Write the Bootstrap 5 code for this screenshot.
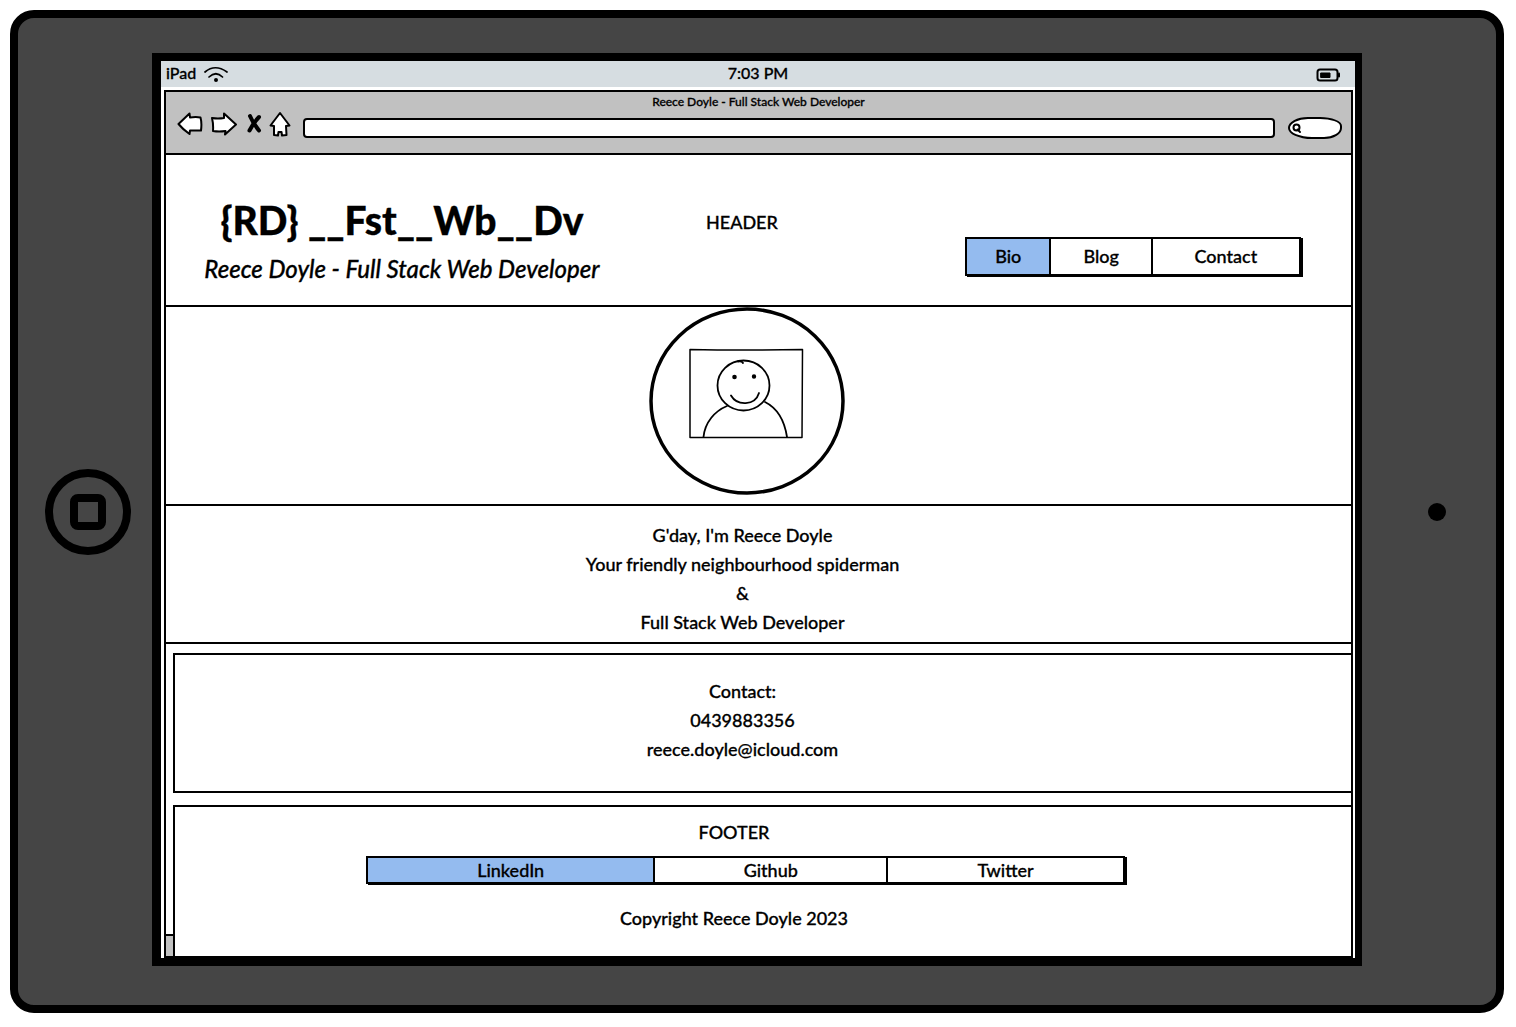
<!DOCTYPE html>
<html lang="en">
<head>
<meta charset="utf-8">
<meta name="viewport" content="width=device-width, initial-scale=1">
<title>Reece Doyle - Full Stack Web Developer</title>
<link href="https://cdn.jsdelivr.net/npm/bootstrap@5.3.0/dist/css/bootstrap.min.css" rel="stylesheet">
<style>
  body { font-family: Lato, sans-serif; font-size: 18px; font-weight: 500; line-height: 29px; color: #000; background: #fff; -webkit-text-stroke: 0.3px #000; }
  svg { display: block; flex: none; fill: none; stroke: #000; stroke-width: 2; stroke-linecap: round; stroke-linejoin: round; }
  a { color: #000; text-decoration: none; }
  .tablet { margin: 10px 12px 13px 10px; padding: 35px 0 39px; border: 8px solid #000; border-radius: 24px; background: #454545; }
  .bezel { width: 134px; flex: none; padding-top: 5px; }
  .bezel-home { padding-left: 5px; }
  .bezel-camera { padding-left: 16px; }
  .home-key { width: 86px; height: 86px; border: 8px solid #000; border-radius: 50%; background: none; }
  .home-key span { width: 36px; height: 36px; border: 8px solid #000; border-radius: 8px; }
  .lens { width: 18px; height: 18px; border-radius: 50%; background: #000; }
  .screen { min-width: 0; background: #fff; border: solid #000; border-width: 8px 7px 8px 9px; }
  .status { height: 26px; padding: 0 15px 2px 5px; background: #d6dde1; font-size: 16px; line-height: 24px; }
  .browser { margin: 3px 2px 0 3px; border: 2px solid #000; border-bottom: 0; }
  .chrome { height: 61px; background: #c1c1c1; }
  .chrome-title { font-size: 12px; line-height: 20px; }
  .tools { padding: 0 9px 0 11px; margin-top: -3px; }
  .tools button { border: 0; padding: 0; background: none; }
  .tools svg { fill: #fff; }
  .address { height: 20px; border: 2px solid #000; border-radius: 4px; background: #fff; padding: 0 8px; font-size: 12px; min-width: 0; margin-left: 10px; }
  .search-box { margin-left: 13px; }
  .search-pill { width: 54px; height: 22px; border: 2px solid #000; border-radius: 20px 22px 18px 24px / 11px 9px 11px 11px; background: #fff; padding: 0 4px 0 16px; font-size: 11px; }
  .search-glyph { left: 4px; top: 6px; }
  .band { border-top: 2px solid #000; }
  .band-header { height: 152px; padding: 0 50px 0 38px; }
  .brand { width: 396px; padding-top: 42px; }
  .brand h1 { font-size: 39px; line-height: 46px; font-weight: 900; }
  .brand p { font-size: 24px; line-height: 36px; }
  .band-label { margin-left: 106px; padding-top: 53px; }
  .tabs { border: 2px solid #000; box-shadow: 2px 1px 0 #000; }
  .tabs a { text-align: center; }
  .tabs a + a { border-left: 2px solid #000; }
  .tabs a.active { background: #94bbef; }
  .tabs-top { width: 336px; margin-top: 82px; line-height: 35px; }
  .tabs-foot { margin: 9px 226px 0 191px; line-height: 24px; }
  .band-portrait { height: 199px; padding-right: 24px; }
  .band-intro { height: 138px; padding: 15px 32px 0 0; }
  .sheet { border: 2px solid #000; border-right: 0; margin-left: 7px; }
  .band-gap { border-top: 2px solid #000; height: 11px; }
  .sheet-contact { height: 140px; padding: 22px 41px 0 0; margin-bottom: 12px; }
  .sheet-footer { height: 153px; margin-left: 0; padding-top: 11px; }
  .foot-text { padding-right: 58px; }
  .scroll-stub { width: 7px; height: 24px; border-top: 2px solid #000; border-bottom: 2px solid #000; background: #c1c1c1; }
</style>
</head>
<body>
<div class="tablet d-flex">
  <div class="bezel bezel-home d-flex align-items-center justify-content-center">
    <button class="home-key d-flex align-items-center justify-content-center p-0" aria-label="Home"><span></span></button>
  </div>

  <div class="screen flex-grow-1">
    <div class="status d-flex align-items-center justify-content-between position-relative">
      <div class="d-flex align-items-center">
        <span>iPad</span>
        <svg class="ms-2 mt-1" width="24" height="18" viewBox="0 0 24 18"><path d="M1 6Q11-2.500 23 6M5 11Q12 4.500 18.500 11" stroke-width="1.700"/><circle cx="12" cy="14" r="1" fill="#000"/></svg>
      </div>
      <span class="position-absolute start-50 translate-middle-x">7:03 PM</span>
      <svg class="mt-1" width="24" height="14" viewBox="0 0 24 14"><rect x="1.500" y="1.500" width="20" height="11" rx="2.500"/><path d="M23 5.500v3"/><path d="M5 5h9v4.500H5z" fill="#000" stroke-width="1"/></svg>
    </div>

    <div class="browser">
      <div class="chrome d-flow-root">
        <div class="chrome-title text-center">Reece Doyle - Full Stack Web Developer</div>
        <div class="tools d-flex align-items-center">
          <button aria-label="Back"><svg width="26" height="24" viewBox="0 0 26 24"><path d="M1.500 12 12.500 1.500 13 5.500Q19 4.500 23.500 5.500 25 11 24 18.500L13 18.500 12.500 22Q6 17.500 1.500 12Z"/></svg></button>
          <button class="ms-2" aria-label="Forward"><svg width="26" height="24" viewBox="0 0 26 24"><path d="M1 6Q7 7 13 6V1.500L25 12.500 14 22.500 14.500 19Q8 20 2 19 2.500 12 1 6Z"/></svg></button>
          <button class="ms-2" aria-label="Stop"><svg width="18" height="24" viewBox="0 0 18 24"><path d="M5 4Q8 11 14 18.500M14 5Q9 10 4.500 18.500" stroke-width="4"/></svg></button>
          <button class="ms-1" aria-label="Home page"><svg width="26" height="26" viewBox="0 0 24 26"><path d="M12 2 21.500 14.500 18 15 18.500 24 14 24.500 13.500 21H10.500L10 24.500 6 24V15L2.500 14.500Z"/></svg></button>
          <input class="address flex-grow-1 mt-2" type="text" aria-label="Address">
          <div class="search-box position-relative d-flex mt-2">
            <input class="search-pill" type="text" aria-label="Search">
            <svg class="search-glyph position-absolute" width="12" height="12" viewBox="0 0 12 12"><circle cx="4.500" cy="4.500" r="3"/><path d="M5.500 6.500 8 9"/></svg>
          </div>
        </div>
      </div>

      <header class="band band-header d-flex align-items-start">
        <div class="brand d-flex flex-column align-items-center flex-shrink-0 text-nowrap">
          <h1 class="mb-2">{RD} __Fst__Wb__Dv</h1>
          <p class="fst-italic mb-0">Reece Doyle - Full Stack Web Developer</p>
        </div>
        <div class="band-label">HEADER</div>
        <nav class="tabs tabs-top d-flex ms-auto" aria-label="Main">
          <a class="active" style="flex:84" href="#bio">Bio</a>
          <a style="flex:101" href="#blog">Blog</a>
          <a style="flex:149" href="#contact">Contact</a>
        </nav>
      </header>

      <section class="band band-portrait d-flex justify-content-center">
        <svg width="196" height="188" viewBox="0 0 196 188" role="img" aria-label="Portrait">
          <ellipse cx="98" cy="94" rx="96" ry="92" stroke-width="3.500"/>
          <path d="M41 42.500 Q95 43.500 153.500 42.500L153 130.500H41Z" stroke-width="1.500"/>
          <ellipse cx="94.500" cy="78.500" rx="26" ry="25" stroke-width="1.800"/>
          <path d="M89 54.500Q93 54 94 56M82 88.500C88 99 106 99 110 86M54.500 130C56 115 66 104 78 99M116 95Q134 104 138 130" stroke-width="1.800"/>
          <circle cx="85.500" cy="70" r="1.300" fill="#000"/><circle cx="105" cy="69.500" r="1.200" fill="#000"/>
        </svg>
      </section>

      <section class="band band-intro text-center" id="bio">
        <div>G'day, I'm Reece Doyle</div>
        <div>Your friendly neighbourhood spiderman</div>
        <div>&amp;</div>
        <div>Full Stack Web Developer</div>
      </section>
      <div class="band-gap"></div>

      <section class="sheet sheet-contact text-center" id="contact">
        <div>Contact:</div>
        <div>0439883356</div>
        <div><a href="mailto:reece.doyle@icloud.com">reece.doyle@icloud.com</a></div>
      </section>

      <div class="d-flex align-items-end">
        <div class="scroll-stub flex-shrink-0"></div>
        <footer class="sheet sheet-footer flex-grow-1">
          <div class="foot-text text-center">FOOTER</div>
          <nav class="tabs tabs-foot d-flex" aria-label="Social">
            <a class="active" style="flex:288" href="#linkedin">LinkedIn</a>
            <a style="flex:233" href="#github">Github</a>
            <a style="flex:237" href="#twitter">Twitter</a>
          </nav>
          <div class="foot-text text-center pt-3 mt-1">Copyright Reece Doyle 2023</div>
        </footer>
      </div>
    </div>
  </div>

  <div class="bezel bezel-camera d-flex align-items-center justify-content-center">
    <div class="lens"></div>
  </div>
</div>
<script src="https://cdn.jsdelivr.net/npm/bootstrap@5.3.0/dist/js/bootstrap.bundle.min.js"></script>
</body>
</html>
